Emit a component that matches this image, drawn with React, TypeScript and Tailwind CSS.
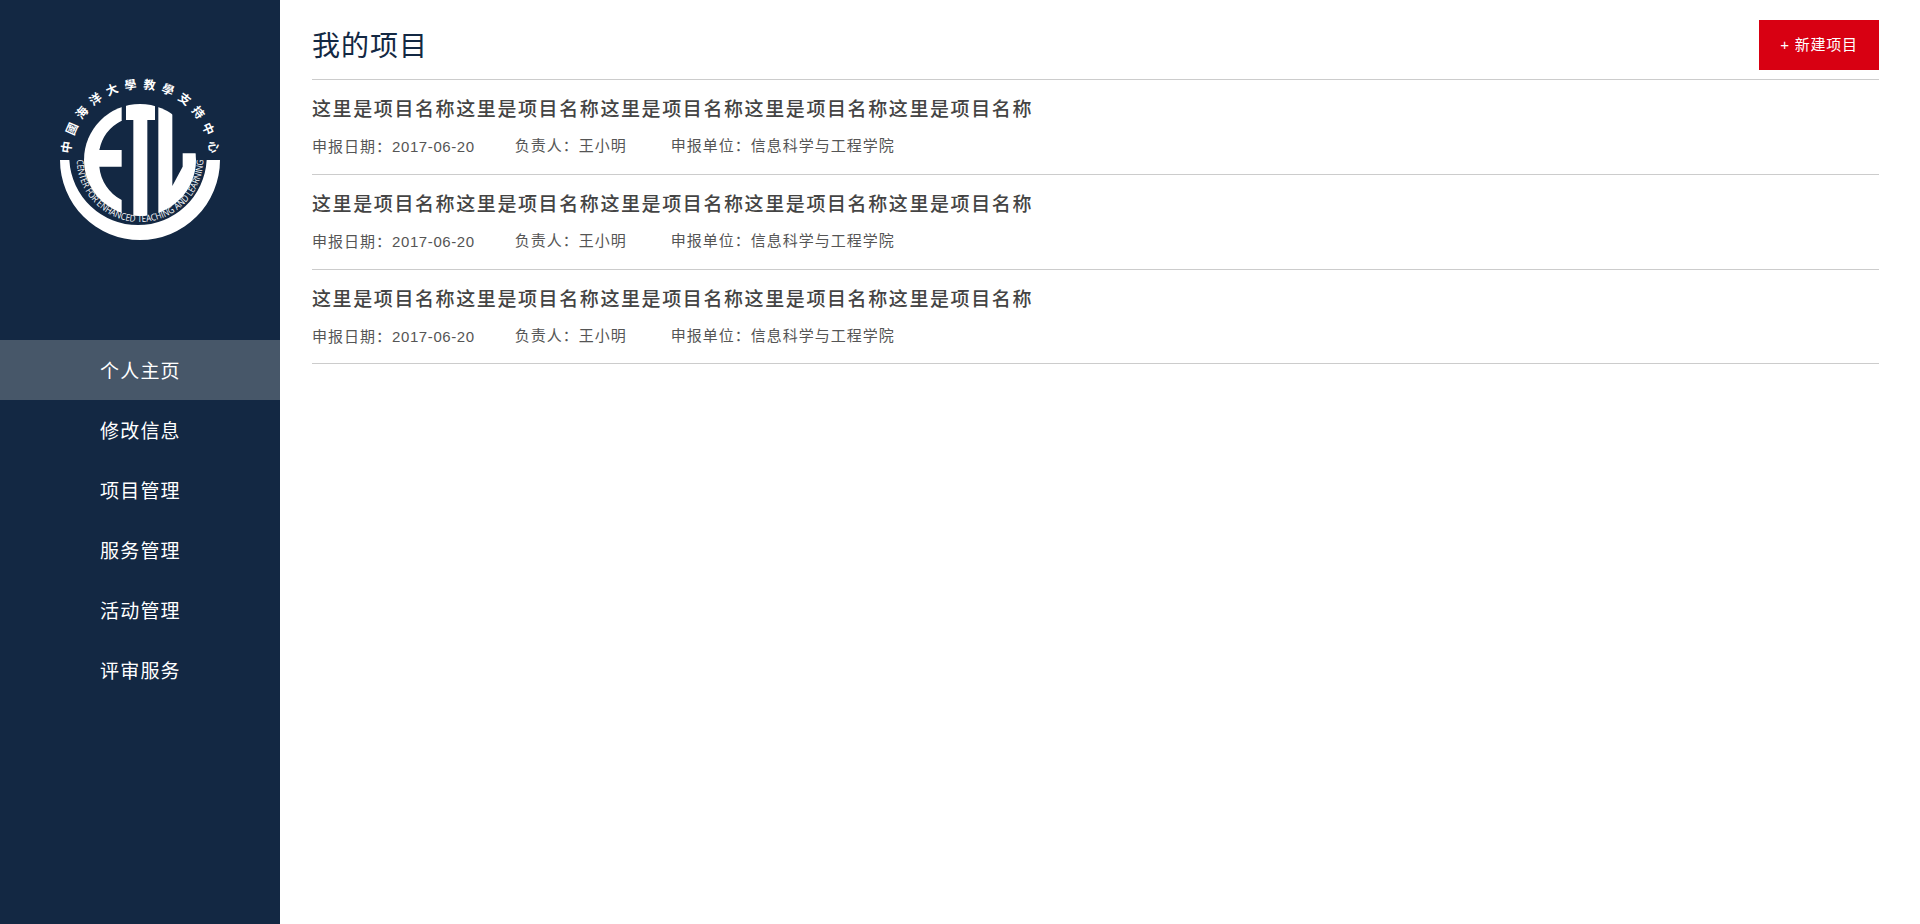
const menuItems = ["个人主页", "修改信息", "项目管理", "服务管理", "活动管理", "评审服务"];

const projects = [1, 2, 3];

function Logo() {
  return (
    <svg viewBox="0 0 600 570" className="mx-auto block h-[190px] w-[200px]">
      <defs>
        <clipPath id="disc">
          <circle cx="300" cy="300" r="168" />
        </clipPath>
        <path id="topArc" d="M 90 296 A 210 210 0 0 1 510 296" />
        <path id="bottomArc" d="M 110 296 A 190 190 0 0 0 490 296" />
      </defs>
      {/* outer crescent */}
      <path
        d="M 60 300 A 240 240 0 0 0 540 300 L 500 300 A 206.3 206.3 0 0 1 88 300 Z"
        fill="#fff"
      />
      <g clipPath="url(#disc)" fill="#fff">
        {/* E */}
        <path
          fillRule="evenodd"
          d="M 245 100 L 245 500 L 100 500 L 100 100 Z M 245 182 A 126 126 0 0 0 178 270 L 245 270 Z M 245 320 L 178 320 A 126 126 0 0 0 245 420 Z"
        />
        {/* T */}
        <path d="M 258 100 L 345 100 L 345 180 L 322 180 L 322 500 L 280 500 L 280 180 L 258 180 Z" />
        {/* L */}
        <path d="M 355 100 L 397 100 L 397 378 L 428 320 L 428 280 L 500 280 L 500 500 L 355 500 Z" />
      </g>
      <text
        fill="#fff"
        fontSize="36"
        fontWeight="700"
        fontFamily="'Noto Sans CJK TC', sans-serif"
      >
        <textPath href="#topArc" startOffset="50%" textAnchor="middle" textLength="630">
          中國海洋大學教學支持中心
        </textPath>
      </text>
      <text fill="#fff" fontSize="28" fontFamily="'Open Sans', sans-serif">
        <textPath
          href="#bottomArc"
          startOffset="50%"
          textAnchor="middle"
          textLength="590"
          lengthAdjust="spacingAndGlyphs"
        >
          CENTER FOR ENHANCED TEACHING AND LEARNING
        </textPath>
      </text>
    </svg>
  );
}

export default function App() {
  return (
    <div className="flex min-h-screen bg-white font-['Liberation_Sans','Noto_Sans_CJK_SC',sans-serif]">
      <aside className="w-[280px] shrink-0 bg-[#132843] pt-[60px]">
        <Logo />
        <nav className="mt-[90px]">
          {menuItems.map((item, index) => (
            <div
              key={item}
              className={`h-[60px] pl-[100px] text-[19px] leading-[63px] tracking-[1.2px] text-white ${
                index === 0 ? "bg-[#475769]" : ""
              }`}
            >
              {item}
            </div>
          ))}
        </nav>
      </aside>

      <main className="flex-1 pl-[32px] pr-[41px]">
        <header className="flex h-[80px] items-start justify-between border-b border-[#ccc] pt-[20px]">
          <h1 className="text-[28px] leading-[54px] tracking-[1px] text-[#132843]">我的项目</h1>
          <button
            type="button"
            className="h-[50px] w-[120px] bg-[#d80012] text-[15px] tracking-[0.8px] text-white"
          >
            + 新建项目
          </button>
        </header>

        {projects.map((id) => (
          <div
            key={id}
            className={`border-b border-[#ccc] pt-[16px] ${id === 3 ? "h-[94px]" : "h-[95px]"}`}
          >
            <div className="text-[19px] leading-[28px] font-medium tracking-[1.6px] text-[#444]">
              这里是项目名称这里是项目名称这里是项目名称这里是项目名称这里是项目名称
            </div>
            <div className="mt-[12px] flex items-start text-[15px] leading-[20px] tracking-[1px] text-[#555]">
              <span className="mt-[1px] mr-[40px]">
                申报日期：<span className="tracking-[0.6px]">2017-06-20</span>
              </span>
              <span className="mr-[44px]">负责人：王小明</span>
              <span>申报单位：信息科学与工程学院</span>
            </div>
          </div>
        ))}
      </main>
    </div>
  );
}
